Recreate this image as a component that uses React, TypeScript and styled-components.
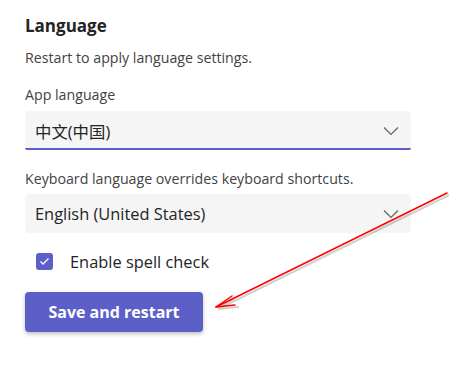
import React from "react";
import styled, { createGlobalStyle } from "styled-components";

const Global = createGlobalStyle`
  html, body { margin: 0; padding: 0; background: #ffffff; }
  body { font-family: "Open Sans", "Noto Sans CJK SC", sans-serif; color: #242424; }
`;

const Page = styled.div`
  position: relative;
  width: 463px;
  height: 375px;
  padding: 14px 0 0 25px;
  box-sizing: border-box;
  overflow: hidden;
`;

const Heading = styled.h2`
  margin: 0;
  font-size: 17px;
  font-weight: 700;
  line-height: 24px;
  color: #242424;
`;

const Note = styled.p<{ $top: number }>`
  margin: ${(p) => p.$top}px 0 0;
  font-size: 14.2px;
  line-height: 20px;
  color: #424242;
`;

const Select = styled.div<{ $focused?: boolean; $top: number }>`
  margin-top: ${(p) => p.$top}px;
  width: 386px;
  height: 39px;
  box-sizing: border-box;
  display: flex;
  align-items: center;
  justify-content: space-between;
  padding: 0 12px 0 10px;
  background: #f5f5f5;
  border-radius: 4px;
  ${(p) => (p.$focused ? "border-bottom: 2px solid #5b5fc7; border-radius: 4px 4px 2px 2px; padding-top: 2px;" : "")}
  font-size: 16.4px;
  color: #242424;
`;

const CheckRow = styled.label`
  display: flex;
  align-items: center;
  gap: 17px;
  height: 22px;
  margin: 17px 0 0 11px;
  font-size: 16.4px;
  color: #242424;
`;

const Box = styled.span`
  width: 17px;
  height: 17px;
  border-radius: 3px;
  background: #5b5fc7;
  display: flex;
  align-items: center;
  justify-content: center;
`;

const Button = styled.button`
  display: block;
  margin-top: 20px;
  width: 178px;
  height: 40px;
  border: none;
  border-radius: 4px;
  background: #5b5fc7;
  color: #ffffff;
  font-family: "Open Sans", sans-serif;
  font-size: 16px;
  font-weight: 700;
  box-shadow: 0 2px 4px rgba(0, 0, 0, 0.25);
`;

const Arrow = styled.svg`
  position: absolute;
  left: 0;
  top: 0;
  pointer-events: none;
`;

const Chevron = () => (
  <svg width="16" height="10" viewBox="0 0 16 10">
    <path d="M1 1.5 L8 8.5 L15 1.5" fill="none" stroke="#616161" strokeWidth="1.2" />
  </svg>
);

export default function App() {
  return (
    <>
      <Global />
      <Page>
        <Heading>Language</Heading>
        <Note $top={10}>Restart to apply language settings.</Note>
        <Note $top={17}>App language</Note>
        <Select $focused $top={6}>
          <span>中文(中国)</span>
          <Chevron />
        </Select>
        <Note $top={19}>Keyboard language overrides keyboard shortcuts.</Note>
        <Select $top={5}>
          <span>English (United States)</span>
          <Chevron />
        </Select>
        <CheckRow>
          <Box>
            <svg width="11" height="9" viewBox="0 0 11 9">
              <path d="M1.5 4.5 L4 7 L9.5 1.5" fill="none" stroke="#fff" strokeWidth="1.3" />
            </svg>
          </Box>
          Enable spell check
        </CheckRow>
        <Button>Save and restart</Button>
        <Arrow width="463" height="375" viewBox="0 0 463 375">
          <g stroke="#000" strokeOpacity="0.18" strokeWidth="2" fill="none" transform="translate(2,2)">
            <path d="M447 193 L216 307 M216 307 L234 295 M216 307 L237 305" />
          </g>
          <g stroke="#ff0000" strokeWidth="1.5" fill="none" strokeLinecap="round">
            <path d="M447 193 L216 307" />
            <path d="M216 307 L232 296 M216 307 L235 305" />
          </g>
        </Arrow>
      </Page>
    </>
  );
}
